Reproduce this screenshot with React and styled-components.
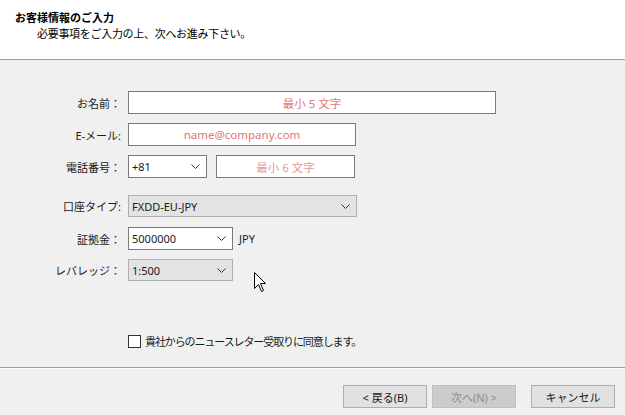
import React from "react";
import styled, { createGlobalStyle } from "styled-components";

const Global = createGlobalStyle`
  html, body { margin: 0; padding: 0; background: #f0f0f0; }
  body { font-family: "Noto Sans", "Noto Sans CJK JP", sans-serif; font-size: 11px; color: #1a1a1a; }
  * { box-sizing: border-box; }
`;

const Page = styled.div`
  width: 625px;
  height: 415px;
  display: flex;
  flex-direction: column;
  background: #f0f0f0;
  position: relative;
  overflow: hidden;
`;

const Header = styled.div`
  height: 60px;
  background: #ffffff;
  padding: 10px 0 0 15px;
  border-bottom: 1px solid #a0a0a0;
`;

const Title = styled.div`
  font-weight: bold;
  font-size: 11px;
  line-height: 16px;
  color: #000;
`;

const Subtitle = styled.div`
  padding-left: 22px;
  font-size: 11px;
  line-height: 16px;
  letter-spacing: -0.3px;
  color: #000;
`;

const Body = styled.div`
  flex: 1;
  padding-top: 31px;
  display: flex;
  flex-direction: column;
`;

const Row = styled.div`
  display: flex;
  align-items: center;
  margin-top: ${(p) => p.$gap || 0}px;
  height: ${(p) => p.$h || 23}px;
`;

const Label = styled.div`
  width: 121px;
  text-align: right;
  margin-right: 7px;
  color: #1a1a1a;
  white-space: nowrap;
`;

const TextBox = styled.div`
  width: ${(p) => p.$w}px;
  height: 100%;
  margin-left: ${(p) => p.$ml || 0}px;
  background: #fff;
  border: 1px solid #7a7a7a;
  display: flex;
  align-items: center;
  justify-content: center;
  color: ${(p) => (p.$light ? "#e79a9c" : "#e0787c")};
  font-size: 11.5px;
`;

const Select = styled.div`
  width: ${(p) => p.$w}px;
  height: 100%;
  background: ${(p) => (p.$gray ? "#e3e3e3" : "#ffffff")};
  border: 1px solid ${(p) => (p.$gray ? "#adadad" : "#7a7a7a")};
  display: flex;
  align-items: center;
  justify-content: space-between;
  padding: 0 6px 0 3px;
  color: #1a1a1a;
`;

const Unit = styled.span`
  margin-left: 6px;
`;

const Chevron = () => (
  <svg width="9" height="5" viewBox="0 0 9 5">
    <path d="M0.5 0.5 L4.5 4.5 L8.5 0.5" fill="none" stroke="#333" strokeWidth="1" />
  </svg>
);

const CheckRow = styled.label`
  display: flex;
  align-items: center;
  margin-top: 53px;
  margin-left: 128px;
  height: 14px;
  color: #1a1a1a;
  letter-spacing: -1.1px;
`;

const Box = styled.span`
  width: 13px;
  height: 13px;
  border: 1px solid #333;
  background: #fff;
  margin-right: 4px;
`;

const Footer = styled.div`
  border-top: 1px solid #a0a0a0;
  box-shadow: inset 0 1px 0 #ffffff;
  height: 48px;
  padding: 17px 10px 0 0;
  display: flex;
  justify-content: flex-end;
`;

const Button = styled.div`
  width: 84px;
  height: 23px;
  margin-left: ${(p) => p.$ml || 0}px;
  background: ${(p) => (p.$disabled ? "#cccccc" : "#e1e1e1")};
  border: 1px solid ${(p) => (p.$disabled ? "#bfbfbf" : "#adadad")};
  color: ${(p) => (p.$disabled ? "#8d8d8d" : "#1a1a1a")};
  display: flex;
  align-items: center;
  justify-content: center;
`;

const Cursor = styled.svg`
  position: absolute;
  left: 254px;
  top: 272px;
`;

export default function App() {
  return (
    <>
      <Global />
      <Page>
        <Header>
          <Title>お客様情報のご入力</Title>
          <Subtitle>必要事項をご入力の上、次へお進み下さい。</Subtitle>
        </Header>
        <Body>
          <Row>
            <Label>お名前：</Label>
            <TextBox $w={368}>最小 5 文字</TextBox>
          </Row>
          <Row $gap={9}>
            <Label>E-メール:</Label>
            <TextBox $w={228}>name@company.com</TextBox>
          </Row>
          <Row $gap={9}>
            <Label>電話番号：</Label>
            <Select $w={79}>
              <span>+81</span>
              <Chevron />
            </Select>
            <TextBox $w={139} $ml={9} $light>最小 6 文字</TextBox>
          </Row>
          <Row $gap={17} $h={22}>
            <Label>口座タイプ:</Label>
            <Select $w={229} $gray>
              <span>FXDD-EU-JPY</span>
              <Chevron />
            </Select>
          </Row>
          <Row $gap={10}>
            <Label>証拠金：</Label>
            <Select $w={105}>
              <span>5000000</span>
              <Chevron />
            </Select>
            <Unit>JPY</Unit>
          </Row>
          <Row $gap={9} $h={22}>
            <Label>レバレッジ：</Label>
            <Select $w={105} $gray>
              <span>1:500</span>
              <Chevron />
            </Select>
          </Row>
          <CheckRow>
            <Box />
            貴社からのニュースレター受取りに同意します。
          </CheckRow>
        </Body>
        <Footer>
          <Button>&lt; 戻る(B)</Button>
          <Button $disabled $ml={5}>次へ(N) &gt;</Button>
          <Button $ml={15}>キャンセル</Button>
        </Footer>
        <Cursor width="13" height="21" viewBox="0 0 13 21">
          <path d="M0.5 0.5 L0.5 16.5 L4.5 12.5 L7.5 19.5 L9.5 18.5 L6.5 11.5 L11.5 11.5 Z" fill="#fff" stroke="#000" strokeWidth="1" strokeLinejoin="miter" />
        </Cursor>
      </Page>
    </>
  );
}
